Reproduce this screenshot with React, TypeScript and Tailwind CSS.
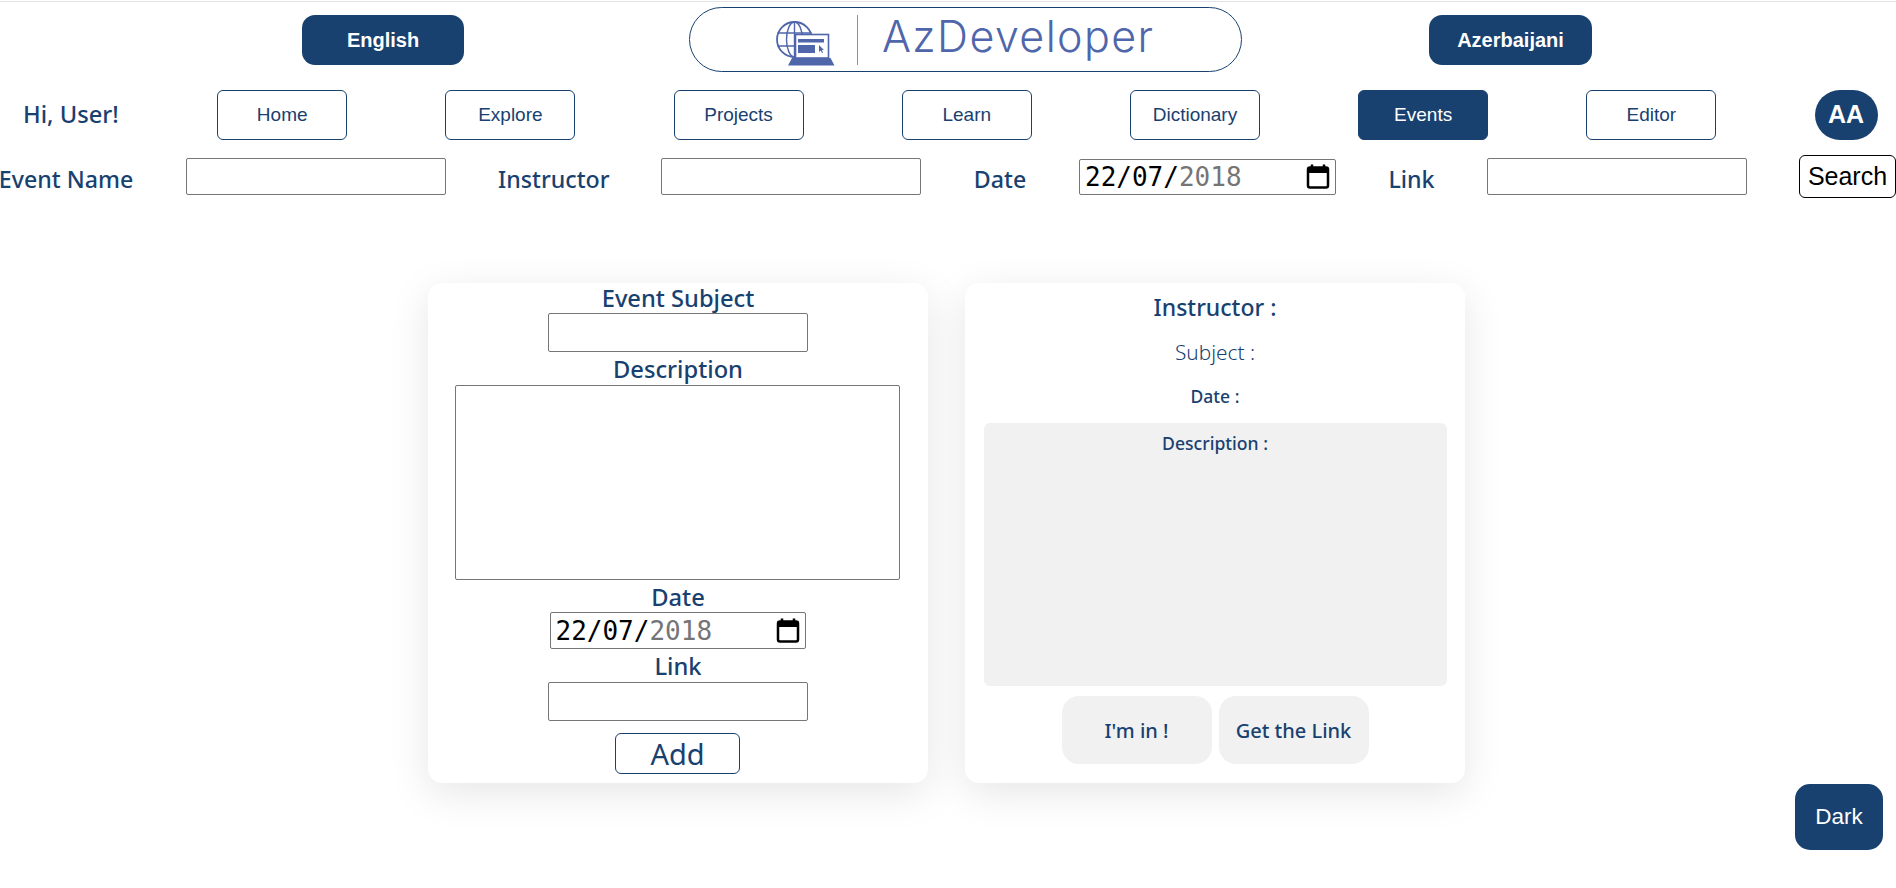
const navItems = ["Home", "Explore", "Projects", "Learn", "Dictionary", "Events", "Editor"];

function Logo() {
  return (
    <div className="mr-[187px] flex h-[65px] w-[553px] items-center rounded-[33px] border border-[#184170] pl-[84px]">
      <svg width="62" height="54" viewBox="0 0 62 54" fill="none" stroke="#4f66ab" className="shrink-0">
        <circle cx="20.5" cy="26.5" r="17.5" strokeWidth="1.8" />
        <ellipse cx="20.5" cy="26.5" rx="8" ry="17.5" strokeWidth="1.4" />
        <path d="M20.5 9v35M3.5 20h34M3.5 33h34" strokeWidth="1.4" />
        <rect x="21.5" y="21.5" width="33" height="23.5" fill="#fff" strokeWidth="1.6" />
        <rect x="24" y="26" width="26" height="3.5" fill="#4f66ab" stroke="none" />
        <rect x="24" y="32" width="17" height="8" fill="#4f66ab" stroke="none" />
        <path d="M45 32v7l1.7-1.6 1.3 2.6 1-.5-1.2-2.5h2.2z" fill="#4f66ab" stroke="none" />
        <path d="M18 45h38.5l4 7.5H14z" fill="#4f66ab" stroke="none" />
      </svg>
      <div className="ml-[21px] h-[50px] w-px bg-[#7f90c2]" />
      <span className="ml-[24px] -mt-[6px] font-['Inter',sans-serif] text-[43px] leading-none font-light tracking-[1.4px] whitespace-nowrap text-[#4f66ab]">
        AzDeveloper
      </span>
    </div>
  );
}

function TextField({ className = "h-[39px]" }: { className?: string }) {
  return (
    <input
      type="text"
      aria-label="field"
      className={`w-[260px] rounded-[2px] border border-[#767676] bg-white ${className}`}
    />
  );
}

function DateField({ className }: { className: string }) {
  return (
    <div className={`flex items-center justify-between rounded-[2px] border border-[#767676] bg-white px-[5px] ${className}`}>
      <span className="pt-[1px] font-['DejaVu_Sans_Mono',monospace] text-[26px] leading-none font-normal text-black">
        22/07/<span className="text-[#757575]">2018</span>
      </span>
      <svg width="24" height="27" viewBox="0 0 24 26" fill="none" className="shrink-0">
        <path d="M6 1v4M18 1v4" stroke="#000" strokeWidth="2.5" />
        <rect x="2" y="4" width="20" height="20" rx="2" stroke="#000" strokeWidth="2.5" />
        <rect x="2" y="4" width="20" height="5.5" fill="#000" />
      </svg>
    </div>
  );
}

export default function App() {
  return (
    <div className="relative h-[888px] w-[1896px] overflow-hidden bg-white font-['Noto_Sans',sans-serif] text-[#184170]">
      <div className="mt-px h-px bg-[#e3e3e3]" />

      <div className="mt-[5px] flex items-center pl-[302px]">
        <button className="mr-[225px] h-[50px] w-[162px] rounded-[13px] bg-[#184170] font-['Liberation_Sans',sans-serif] text-[20px] font-bold text-white">
          English
        </button>
        <Logo />
        <button className="h-[50px] w-[163px] rounded-[13px] bg-[#184170] font-['Liberation_Sans',sans-serif] text-[20px] font-bold text-white">
          Azerbaijani
        </button>
      </div>

      <div className="mt-[18px] flex items-center gap-[98.2px] pl-[23px]">
        <span className="mr-[1px] w-[95px] text-center text-[23.7px] font-medium whitespace-nowrap">Hi, User!</span>
        {navItems.map((item) => (
          <button
            key={item}
            className={`h-[50px] w-[130px] rounded-[6px] border border-[#184170] font-['Liberation_Sans',sans-serif] text-[19px] ${
              item === "Events" ? "bg-[#184170] text-white" : "bg-white text-[#184170]"
            }`}
          >
            {item}
          </button>
        ))}
        <div className="flex h-[50px] w-[63px] items-center justify-center rounded-full bg-[#184170] font-['Liberation_Sans',sans-serif] text-[25px] font-bold text-white">
          AA
        </div>
      </div>

      <div className="mt-[15px] -ml-[2px] flex h-[43px] w-[1898px] items-center gap-[52px] text-[23.2px] font-medium">
        <span className="w-[136px] pt-[6px] text-center whitespace-nowrap">Event Name</span>
        <TextField className="h-[37px]" />
        <span className="w-[111px] pt-[6px] text-center whitespace-nowrap">Instructor</span>
        <TextField className="h-[37px]" />
        <span className="w-[54px] pt-[6px] text-center">Date</span>
        <DateField className="h-[36px] w-[257px]" />
        <span className="w-[47px] pt-[6px] text-center">Link</span>
        <TextField className="h-[37px]" />
        <button className="h-[43px] w-[97px] rounded-[6px] border border-black bg-white font-['Liberation_Sans',sans-serif] text-[25px] font-normal text-black">
          Search
        </button>
      </div>

      <div className="mt-[85px] flex gap-[37px] pl-[428px]">
        <section className="flex h-[500px] w-[500px] flex-col items-center rounded-[14px] bg-white shadow-[0_10px_40px_rgba(0,0,0,0.1)]">
          <label className="h-[30px] text-[23.7px] leading-[30px] font-medium">Event Subject</label>
          <TextField />
          <label className="h-[33px] text-[23.7px] leading-[35px] font-medium">Description</label>
          <textarea aria-label="description" className="-ml-[1px] h-[195px] w-[445px] resize-none rounded-[2px] border border-[#767676]" />
          <label className="h-[32px] text-[23.7px] leading-[35px] font-medium">Date</label>
          <DateField className="-ml-[1px] h-[37px] w-[256px]" />
          <label className="h-[33px] text-[23.7px] leading-[35px] font-medium">Link</label>
          <TextField />
          <button className="mt-[12px] -ml-[1px] h-[41px] w-[125px] rounded-[6px] border border-[#184170] text-[29px] leading-none">
            Add
          </button>
        </section>

        <section className="flex h-[500px] w-[500px] flex-col items-center rounded-[14px] bg-white shadow-[0_10px_40px_rgba(0,0,0,0.1)]">
          <h2 className="h-[48px] text-[23px] leading-[48px] font-medium">Instructor :</h2>
          <p className="h-[42px] text-[20.8px] leading-[43px] font-light">Subject :</p>
          <p className="h-[46px] text-[17.5px] leading-[47px] font-medium">Date :</p>
          <div className="mt-[4px] h-[263px] w-[463px] rounded-[6px] bg-[#f1f1f1] text-center text-[17.6px] leading-[40px] font-medium">
            Description :
          </div>
          <div className="mt-[10px] flex gap-[7px]">
            <button className="h-[68px] w-[150px] rounded-[17px] bg-[#f1f1f1] pt-[2px] text-[20px] font-medium">I'm in !</button>
            <button className="h-[68px] w-[150px] rounded-[17px] bg-[#f1f1f1] pt-[2px] text-[20px] font-medium">Get the Link</button>
          </div>
        </section>
      </div>

      <button className="absolute top-[784px] left-[1795px] h-[66px] w-[88px] rounded-[15px] bg-[#184170] font-['Liberation_Sans',sans-serif] text-[22.5px] text-white">
        Dark
      </button>
    </div>
  );
}
